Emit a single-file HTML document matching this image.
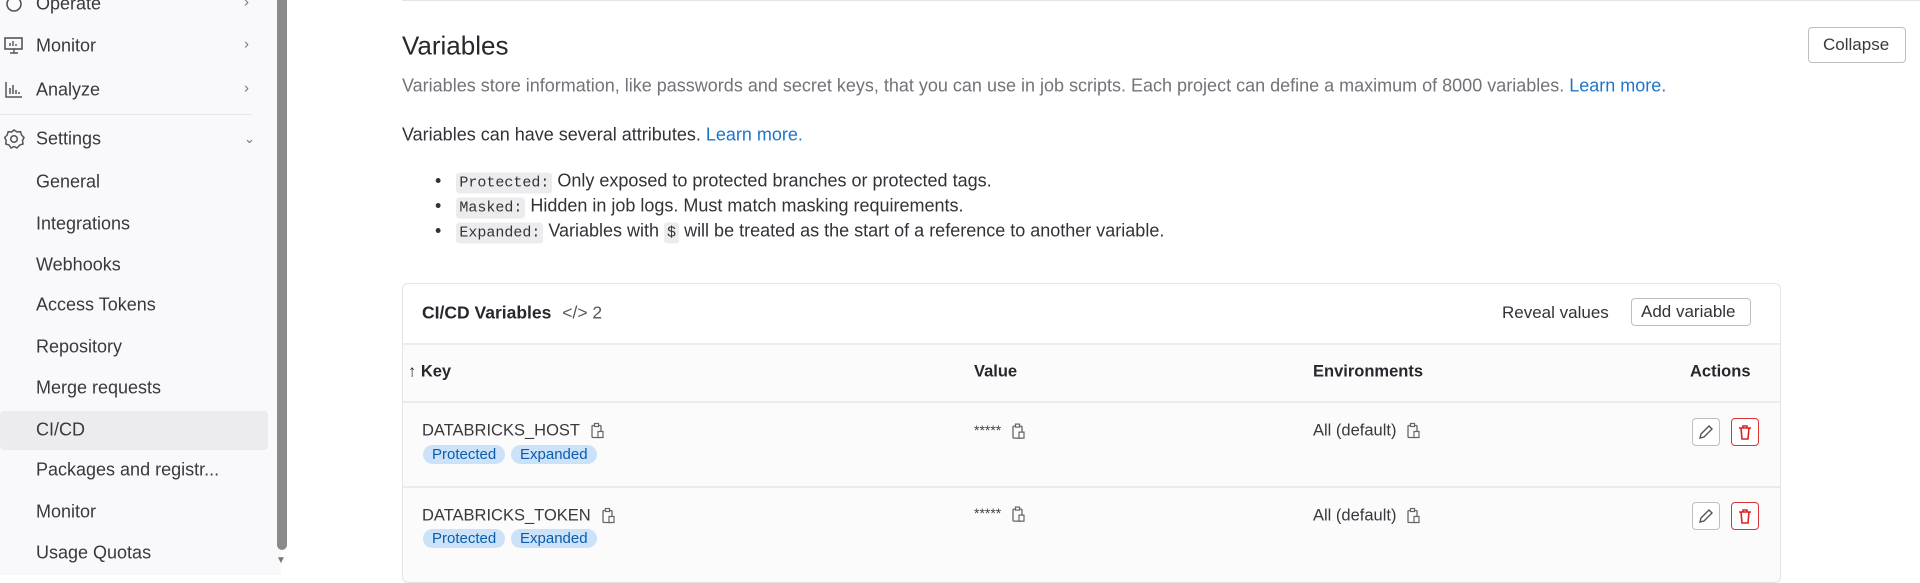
<!DOCTYPE html>
<html><head><meta charset="utf-8"><style>
*{box-sizing:border-box;margin:0;padding:0}
body{width:1920px;height:575px;overflow:hidden;background:#fff;font-family:"Liberation Sans",sans-serif;color:#333238;position:relative}
.side{position:absolute;left:0;top:0;width:281px;height:575px;background:#f9f9fc}
.sb{position:absolute;left:277px;top:0;width:10px;height:550px;background:#8a8a8a;border-radius:0 0 5px 5px}
.sbar{position:absolute;left:276px;top:555px;font-size:10px;color:#777}
.it{position:absolute;left:36px;font-size:18px;color:#3a383f;transform:translateY(-50%)}
.ic{position:absolute;left:3px;transform:translateY(-50%)}
.chev{position:absolute;left:244px;font-size:15px;color:#777;transform:translateY(-50%)}
.sel{position:absolute;left:0;top:411px;width:268px;height:39px;background:#ececef;border-radius:4px}
.a{position:absolute;white-space:nowrap;transform:translateY(-50%)}
.code{font-family:"Liberation Mono",monospace;background:#ececef;font-size:15px;padding:2px 3px;border-radius:3px;color:#333}
.link{color:#1f75cb}
.card{position:absolute;left:402px;top:283px;width:1379px;height:300px;border:1px solid #e4e4e8;border-radius:6px;background:#fbfbfb}
.hl{position:absolute;left:0;width:100%;height:2px;background:#ececef}
.badge{position:absolute;height:19px;border-radius:10px;background:#cbe2f9;color:#0b5cad;font-size:15px;line-height:19px;padding:0 9px}
.btn{position:absolute;border:1px solid #bfbfc3;border-radius:4px;background:#fff}
.clip{display:inline-block;vertical-align:middle;margin-left:10px}
.t{font-size:18px}
</style></head><body>
<div class="side">
<div class="sel"></div>
<svg class="ic" style="top:4px" width="22" height="20" viewBox="0 0 22 20"><circle cx="11" cy="10" r="7" fill="none" stroke="#555" stroke-width="1.6"/></svg>
<div class="it" style="top:4px">Operate</div><div class="chev" style="top:2px">›</div>
<svg class="ic" style="top:46px" width="22" height="20" viewBox="0 0 22 20"><rect x="2" y="2" width="17" height="11" fill="none" stroke="#555" stroke-width="1.6"/><path d="M7 17h8M11 13v4M7 10v-3M10 10v-5M13 10v-2" stroke="#555" stroke-width="1.4"/></svg>
<div class="it" style="top:46px">Monitor</div><div class="chev" style="top:44px">›</div>
<svg class="ic" style="top:90px" width="22" height="20" viewBox="0 0 22 20"><path d="M3 2v15h16M7 14V8M10 14V5M13 14v-4M16 14v-2" stroke="#555" stroke-width="1.5" fill="none"/></svg>
<div class="it" style="top:90px">Analyze</div><div class="chev" style="top:88px">›</div>
<div style="position:absolute;left:0;top:114px;width:252px;height:1px;background:#e6e6ea"></div>
<svg class="ic" style="top:139px" width="22" height="22" viewBox="0 0 22 22"><path d="M11 2l3 2 3.5-.3 1 3.3 2.5 2.5-1.5 3 .5 3.5-3.3 1L14 20l-3-1.5L8 20l-2-3-3.3-1 .5-3.5L1.7 9.5 4.2 7l1-3.3L8.7 4z" fill="none" stroke="#555" stroke-width="1.5"/><circle cx="11" cy="11" r="3.3" fill="none" stroke="#555" stroke-width="1.5"/></svg>
<div class="it" style="top:139px">Settings</div><div class="chev" style="top:139px;font-size:13px">⌄</div>
<div class="it" style="top:182px">General</div>
<div class="it" style="top:224px">Integrations</div>
<div class="it" style="top:265px">Webhooks</div>
<div class="it" style="top:305px">Access Tokens</div>
<div class="it" style="top:347px">Repository</div>
<div class="it" style="top:388px">Merge requests</div>
<div class="it" style="top:430px">CI/CD</div>
<div class="it" style="top:470px">Packages and registr...</div>
<div class="it" style="top:512px">Monitor</div>
<div class="it" style="top:553px">Usage Quotas</div>
</div>
<div class="sb"></div>
<div class="sbar">▼</div>
<div style="position:absolute;left:402px;top:0;width:1518px;height:1px;background:#e4e4e8"></div>

<div class="a" style="left:402px;top:46px;font-size:26px;color:#28272d">Variables</div>
<div class="btn" style="left:1808px;top:27px;width:98px;height:36px"></div>
<div class="a" style="left:1823px;top:45px;font-size:17px;color:#3a383f">Collapse</div>
<div class="a t" style="left:402px;top:86px;color:#737278">Variables store information, like passwords and secret keys, that you can use in job scripts. Each project can define a maximum of 8000 variables. <span class="link">Learn more.</span></div>
<div class="a t" style="left:402px;top:135px">Variables can have several attributes. <span class="link">Learn more.</span></div>
<div class="a t" style="left:435px;top:181px">•&nbsp;&nbsp; <span class="code">Protected:</span> Only exposed to protected branches or protected tags.</div>
<div class="a t" style="left:435px;top:206px">•&nbsp;&nbsp; <span class="code">Masked:</span> Hidden in job logs. Must match masking requirements.</div>
<div class="a t" style="left:435px;top:231px">•&nbsp;&nbsp; <span class="code">Expanded:</span> Variables with <span class="code">$</span> will be treated as the start of a reference to another variable.</div>

<div class="card">
<div style="position:absolute;left:0;top:0;width:100%;height:59px;background:#fff;border-radius:6px 6px 0 0"></div>
<div class="hl" style="top:59px"></div>
<div class="hl" style="top:117px"></div>
<div class="hl" style="top:202px"></div>
</div>
<div class="a" style="left:422px;top:313px;font-size:17.5px;font-weight:bold;color:#28272d">CI/CD Variables <span style="font-weight:normal;color:#555;margin-left:6px">&lt;/&gt; 2</span></div>
<div class="a" style="left:1502px;top:313px;font-size:17px">Reveal values</div>
<div class="btn" style="left:1631px;top:298px;width:120px;height:28px"></div>
<div class="a" style="left:1641px;top:312px;font-size:17px">Add variable</div>

<div class="a" style="left:408px;top:372px;font-size:16.5px;font-weight:bold;color:#28272d">↑ Key</div>
<div class="a" style="left:974px;top:372px;font-size:16.5px;font-weight:bold;color:#28272d">Value</div>
<div class="a" style="left:1313px;top:372px;font-size:16.5px;font-weight:bold;color:#28272d">Environments</div>
<div class="a" style="left:1690px;top:372px;font-size:16.5px;font-weight:bold;color:#28272d">Actions</div>

<svg width="0" height="0" style="position:absolute"><defs><g id="cp"><rect x="2" y="3" width="9" height="12" rx="1" fill="none" stroke="#666" stroke-width="1.3"/><rect x="4.5" y="1" width="4" height="3" fill="#fff" stroke="#666" stroke-width="1.2"/><path d="M8 9h5v6H8z" fill="#fff" stroke="#666" stroke-width="1.2"/></g>
<g id="ed"><path d="M4 16l1-4 8-8 3 3-8 8z" fill="none" stroke="#555" stroke-width="1.4"/></g>
<g id="tr"><path d="M4 6h12M8 6V4h4v2M6 6l1 11h6l1-11" fill="none" stroke="#d22" stroke-width="1.6"/></g></defs></svg>

<div class="a" style="left:422px;top:431px;font-size:16.5px;color:#3a383f">DATABRICKS_HOST<svg class="clip" width="16" height="17"><use href="#cp"/></svg></div>
<div class="badge" style="left:423px;top:445px">Protected</div><div class="badge" style="left:511px;top:445px">Expanded</div>
<div class="a" style="left:974px;top:431px;font-size:14px;color:#444">*****<svg class="clip" width="16" height="17"><use href="#cp"/></svg></div>
<div class="a" style="left:1313px;top:431px;font-size:16.5px;color:#3a383f">All (default)<svg class="clip" width="16" height="17"><use href="#cp"/></svg></div>
<div class="btn" style="left:1692px;top:418px;width:28px;height:28px"><svg width="26" height="26" viewBox="-3 -3 26 26"><use href="#ed"/></svg></div>
<div class="btn" style="left:1731px;top:418px;width:28px;height:28px;border-color:#d33"><svg width="26" height="26" viewBox="-3 -3 26 26"><use href="#tr"/></svg></div>

<div class="a" style="left:422px;top:516px;font-size:16.5px;color:#3a383f">DATABRICKS_TOKEN<svg class="clip" width="16" height="17"><use href="#cp"/></svg></div>
<div class="badge" style="left:423px;top:529px">Protected</div><div class="badge" style="left:511px;top:529px">Expanded</div>
<div class="a" style="left:974px;top:514px;font-size:14px;color:#444">*****<svg class="clip" width="16" height="17"><use href="#cp"/></svg></div>
<div class="a" style="left:1313px;top:516px;font-size:16.5px;color:#3a383f">All (default)<svg class="clip" width="16" height="17"><use href="#cp"/></svg></div>
<div class="btn" style="left:1692px;top:502px;width:28px;height:28px"><svg width="26" height="26" viewBox="-3 -3 26 26"><use href="#ed"/></svg></div>
<div class="btn" style="left:1731px;top:502px;width:28px;height:28px;border-color:#d33"><svg width="26" height="26" viewBox="-3 -3 26 26"><use href="#tr"/></svg></div>
</body></html>
